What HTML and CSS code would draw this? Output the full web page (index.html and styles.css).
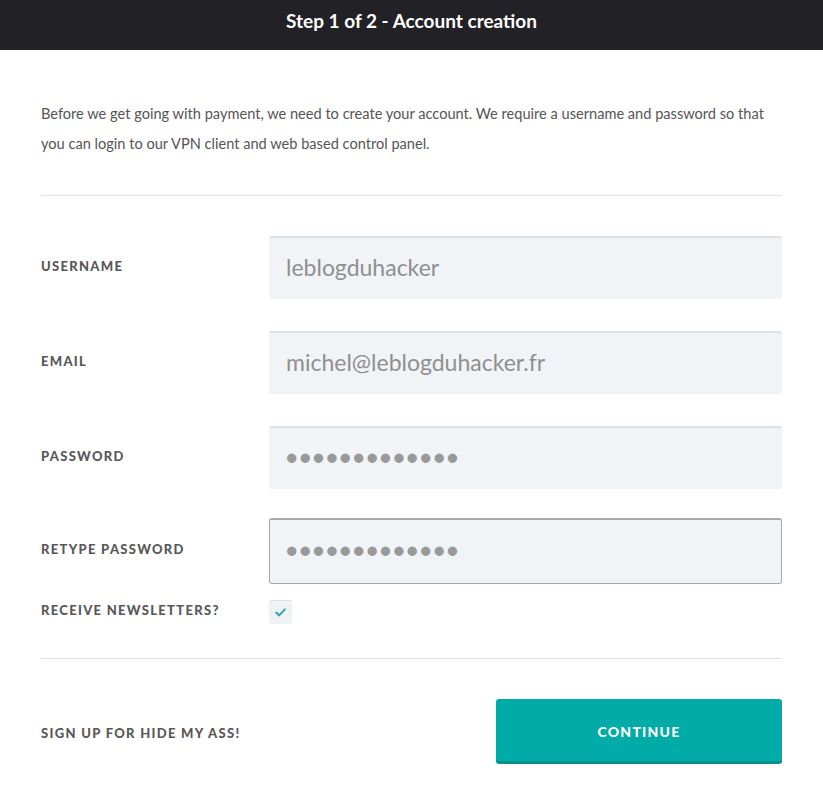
FILE: index.html
```html
<!DOCTYPE html>
<html>
<head>
<meta charset="utf-8">
<link rel="stylesheet" href="styles.css">
</head>
<body>
<header class="topbar">Step 1 of 2 - Account creation</header>
<main class="content">
  <p class="intro">Before we get going with payment, we need to create your account. We require a username and password so that you can login to our VPN client and web based control panel.</p>
  <hr class="rule">
  <form class="form">
    <div class="row">
      <label class="label">USERNAME</label>
      <div class="input">leblogduhacker</div>
    </div>
    <div class="row">
      <label class="label">EMAIL</label>
      <div class="input">michel@leblogduhacker.fr</div>
    </div>
    <div class="row">
      <label class="label">PASSWORD</label>
      <div class="input dots">●●●●●●●●●●●●●</div>
    </div>
    <div class="row">
      <label class="label">RETYPE PASSWORD</label>
      <div class="input dots focus">●●●●●●●●●●●●●</div>
    </div>
    <div class="row check-row">
      <label class="label">RECEIVE NEWSLETTERS?</label>
      <div class="checkbox">
        <svg width="11" height="9" viewBox="0 0 11 9"><path d="M1.2 4.6 L4.2 7.4 L9.8 1.4" fill="none" stroke="#2fa3a8" stroke-width="2" stroke-linecap="round" stroke-linejoin="round"/></svg>
      </div>
    </div>
  </form>
  <hr class="rule rule2">
  <div class="footer">
    <span class="label">SIGN UP FOR HIDE MY ASS!</span>
    <button class="btn" type="button">CONTINUE</button>
  </div>
</main>
</body>
</html>
```
FILE: styles.css
```css
* { box-sizing: border-box; }
html, body { margin: 0; padding: 0; background: #fff; }
body { font-family: Lato, "Open Sans", sans-serif; color: #555; }
.topbar {
  height: 50px;
  background: #222126;
  color: #fff;
  font-weight: 700;
  font-size: 19px;
  display: flex;
  align-items: center;
  justify-content: center;
  padding-bottom: 10px;
}
.content { padding: 0 41px; }
.intro {
  margin: 0;
  padding-top: 49px;
  font-size: 14.6px;
  line-height: 30px;
  color: #555;
}
.rule {
  border: 0;
  border-top: 1px solid #e0e0e0;
  margin: 36px 0 0;
}
.form { padding-top: 40px; }
.row {
  display: flex;
  align-items: center;
  margin-bottom: 32px;
}
.label {
  width: 228px;
  flex: none;
  font-size: 13px;
  font-weight: 900;
  letter-spacing: 1.3px;
  color: #585858;
  padding-bottom: 4px;
}
.input {
  flex: 1;
  height: 63px;
  background: #f0f4f7;
  border-radius: 3px;
  border-top: 2px solid #dde1e4;
  display: flex;
  align-items: center;
  padding-left: 17px;
  padding-bottom: 4px;
  font-size: 23px;
  color: #8f8f8f;
}
.dots { font-size: 19px; letter-spacing: 2px; color: #999; }
.input.focus {
  height: 66px;
  border: 1px solid #a9a9a9;
  border-top: 2px solid #a9a9a9;
  padding-left: 16px;
}
.row:nth-child(4) { margin-bottom: 16px; margin-top: -3px; }
.check-row { align-items: flex-start; margin-bottom: 0; }
.check-row .label { padding-top: 2px; padding-bottom: 0; }
.checkbox {
  width: 23px;
  height: 24px;
  background: #eef2f5;
  border-radius: 3px;
  border-top: 1px solid #dde1e4;
  display: flex;
  align-items: center;
  justify-content: center;
}
.rule2 { margin-top: 34px; }
.footer {
  display: flex;
  align-items: center;
  justify-content: space-between;
  padding-top: 40px;
}
.footer .label { width: auto; padding-bottom: 0; padding-top: 2px; }
.btn {
  width: 286px;
  height: 65px;
  border: 0;
  border-bottom: 3px solid #07918e;
  border-radius: 3px;
  background: #00aba8;
  color: #fff;
  font-family: Lato, sans-serif;
  font-weight: 900;
  font-size: 14px;
  letter-spacing: 1.2px;
  padding-top: 4px;
  cursor: pointer;
}
```
